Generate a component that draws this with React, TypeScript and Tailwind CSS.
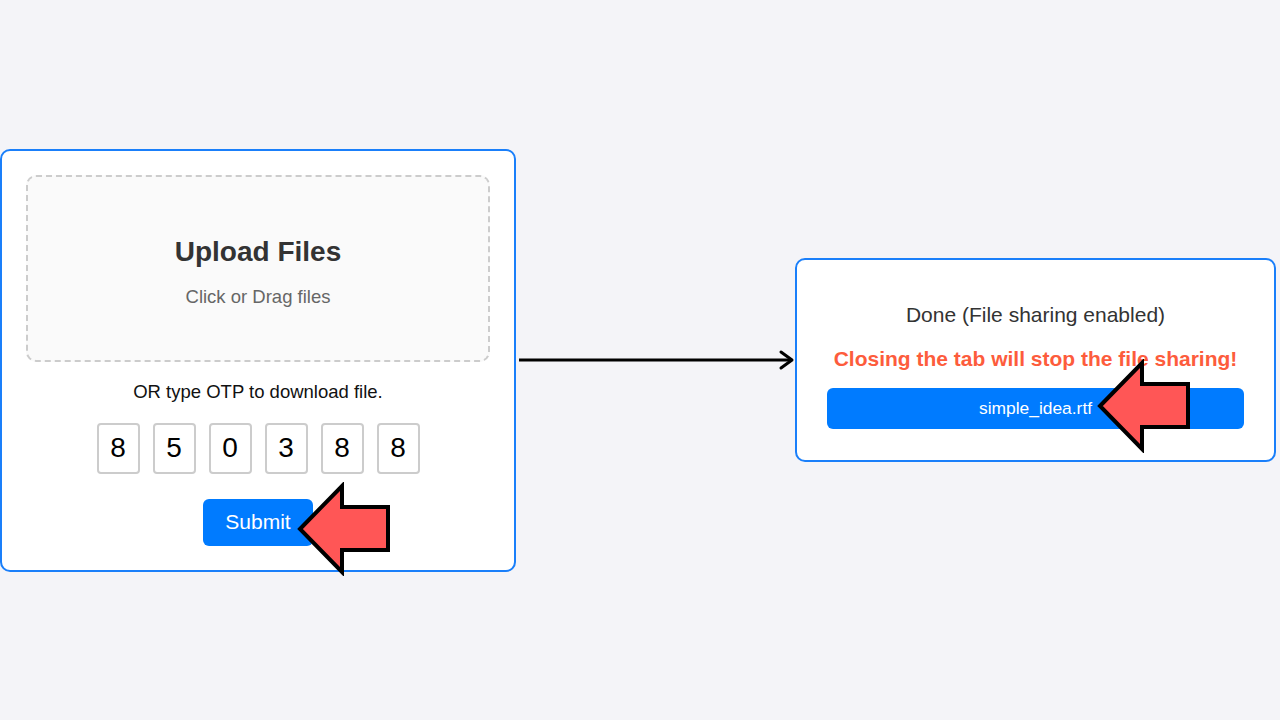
import React from 'react';

const otp = ['8', '5', '0', '3', '8', '8'];

const PointerArrow: React.FC<{ className: string }> = ({ className }) => (
  <svg className={className} width="96" height="94" viewBox="-4 -4 96 94" aria-hidden="true">
    <polygon
      points="0,43 42,0 42,21 88,21 88,64 42,64 42,86"
      fill="#ff5656"
      stroke="#000"
      strokeWidth="4"
      strokeLinejoin="miter"
    />
  </svg>
);

const Connector: React.FC = () => (
  <div className="flex-1 flex items-center">
    <svg width="279" height="24" viewBox="0 0 279 24" aria-hidden="true">
      <line x1="3" y1="12" x2="276" y2="12" stroke="#000" strokeWidth="3" />
      <polyline points="265,4 276,12 265,20" fill="none" stroke="#000" strokeWidth="3" strokeLinecap="round" strokeLinejoin="round" />
    </svg>
  </div>
);

const App: React.FC = () => {
  return (
    <div className="w-full h-screen bg-[#f4f4f8] flex items-center pr-[4px] font-['Liberation_Sans',Arial,sans-serif]">
      {/* upload card */}
      <div className="relative w-[516px] shrink-0 bg-white border-2 border-[#1a7ffa] rounded-[10px] p-[24px] flex flex-col items-center">
        <div className="w-full h-[187px] bg-[#fafafa] border-2 border-dashed border-[#cccccc] rounded-[10px] flex flex-col items-center justify-center pt-[6px]">
          <h2 className="text-[28px] leading-[32px] font-bold text-[#333]">Upload Files</h2>
          <p className="mt-[18px] text-[18.5px] leading-[21px] text-[#666]">Click or Drag files</p>
        </div>
        <p className="mt-[19px] text-[18.5px] leading-[22px] text-[#111]">OR type OTP to download file.</p>
        <div className="mt-[20px] flex gap-[13px]">
          {otp.map((d, i) => (
            <div
              key={i}
              className="w-[43px] h-[51px] border-2 border-[#cccccc] rounded-[4px] flex items-center justify-center text-[28px] text-black"
            >
              {d}
            </div>
          ))}
        </div>
        <button className="mt-[25px] w-[110px] h-[47px] bg-[#007bff] text-white text-[21px] rounded-[6px]">
          Submit
        </button>
        <PointerArrow className="absolute left-[294px] top-[331px]" />
      </div>

      <Connector />

      {/* done card */}
      <div className="relative w-[481px] shrink-0 bg-white border-2 border-[#1a7ffa] rounded-[10px] px-[30px] pt-[43px] pb-[31px] flex flex-col items-center">
        <p className="text-[21px] leading-[24px] text-[#333]">Done (File sharing enabled)</p>
        <p className="mt-[20px] text-[21px] leading-[24px] font-bold text-[#fd5c3c]">Closing the tab will stop the file sharing!</p>
        <button className="mt-[17px] w-full h-[41px] bg-[#007bff] text-white text-[17.4px] rounded-[6px]">
          simple_idea.rtf
        </button>
        <PointerArrow className="absolute left-[299px] top-[99px]" />
      </div>
    </div>
  );
};

export default App;
